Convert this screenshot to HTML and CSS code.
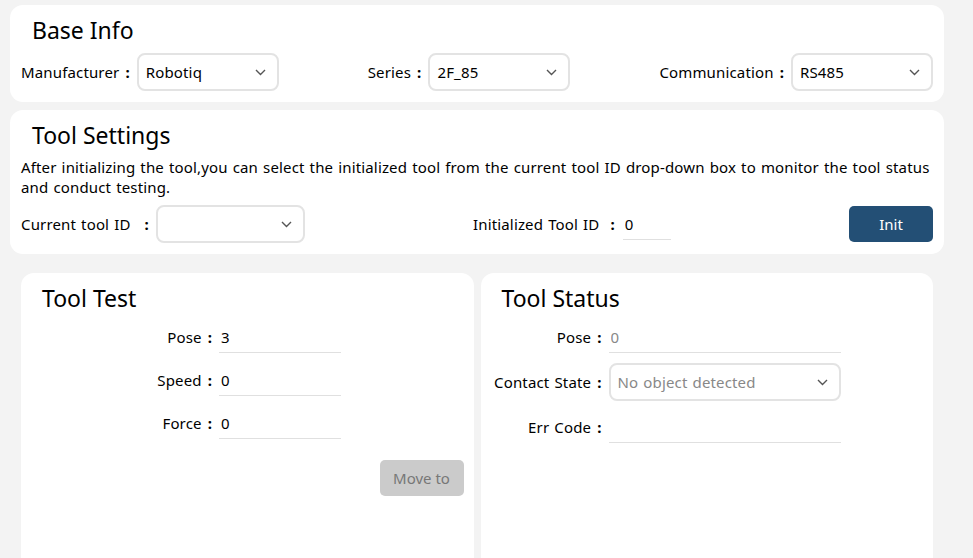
FILE: index.html
```html
<!DOCTYPE html>
<html lang="en">
<head>
    <meta charset="UTF-8">
    <meta name="viewport" content="width=device-width, initial-scale=1.0">
    <title>Tool Config</title>
    <link rel="stylesheet" href="styles.css">
</head>
<body>
    <div class="page">
        <div class="card">
            <h2 class="card-title">Base Info</h2>
            <div class="row">
                <div class="field">
                    <span class="label">Manufacturer<span class="colon">:</span></span>
                    <div class="select select-sm">
                        <span>Robotiq</span>
                        <svg width="11" height="7" viewBox="0 0 11 7"><path d="M1 1l4.5 4.5L10 1" fill="none" stroke="#555" stroke-width="1.4"/></svg>
                    </div>
                </div>
                <div class="field">
                    <span class="label">Series<span class="colon">:</span></span>
                    <div class="select select-sm">
                        <span>2F_85</span>
                        <svg width="11" height="7" viewBox="0 0 11 7"><path d="M1 1l4.5 4.5L10 1" fill="none" stroke="#555" stroke-width="1.4"/></svg>
                    </div>
                </div>
                <div class="field">
                    <span class="label">Communication<span class="colon">:</span></span>
                    <div class="select select-sm">
                        <span>RS485</span>
                        <svg width="11" height="7" viewBox="0 0 11 7"><path d="M1 1l4.5 4.5L10 1" fill="none" stroke="#555" stroke-width="1.4"/></svg>
                    </div>
                </div>
            </div>
        </div>

        <div class="card">
            <h2 class="card-title">Tool Settings</h2>
            <p class="desc">After initializing the tool,you can select the initialized tool from the current tool ID drop-down box to monitor the tool status and conduct testing.</p>
            <div class="row">
                <div class="field">
                    <span class="label">Current tool ID<span class="colon colon-wide">:</span></span>
                    <div class="select select-id">
                        <span></span>
                        <svg width="11" height="7" viewBox="0 0 11 7"><path d="M1 1l4.5 4.5L10 1" fill="none" stroke="#555" stroke-width="1.4"/></svg>
                    </div>
                </div>
                <div class="field field-mid">
                    <span class="label">Initialized Tool ID<span class="colon colon-mid">:</span></span>
                    <input class="line-input line-short" type="text" value="0">
                </div>
                <button class="btn btn-primary">Init</button>
            </div>
        </div>

        <div class="panels">
            <div class="card panel">
                <h2 class="card-title">Tool Test</h2>
                <div class="form form-test">
                    <span class="label">Pose<span class="colon">:</span></span>
                    <input class="line-input" type="text" value="3">
                    <span class="label">Speed<span class="colon">:</span></span>
                    <input class="line-input" type="text" value="0">
                    <span class="label">Force<span class="colon">:</span></span>
                    <input class="line-input" type="text" value="0">
                </div>
                <div class="actions">
                    <button class="btn btn-disabled" disabled>Move to</button>
                </div>
            </div>
            <div class="card panel">
                <h2 class="card-title">Tool Status</h2>
                <div class="form form-status">
                    <span class="label">Pose<span class="colon">:</span></span>
                    <input class="line-input muted" type="text" value="0" readonly>
                    <span class="label">Contact State<span class="colon">:</span></span>
                    <div class="select">
                        <span class="muted">No object detected</span>
                        <svg width="11" height="7" viewBox="0 0 11 7"><path d="M1 1l4.5 4.5L10 1" fill="none" stroke="#555" stroke-width="1.4"/></svg>
                    </div>
                    <span class="label">Err Code<span class="colon">:</span></span>
                    <input class="line-input" type="text" value="" readonly>
                </div>
            </div>
        </div>
    </div>
</body>
</html>
```

FILE: styles.css
```css
body, html {
    margin: 0;
    padding: 0;
    height: 100%;
    background-color: #f3f3f3;
    font-family: "Noto Sans", "Noto Sans CJK SC", sans-serif;
    font-size: 15px;
    letter-spacing: 0.15px;
    word-spacing: 1px;
    color: #000;
    overflow: hidden;
}
.page {
    padding: 5px 29px 0 10px;
}
.card {
    background-color: #fff;
    border-radius: 13px;
    padding: 10px 11px 11px 11px;
    margin-bottom: 8px;
}
.card-title {
    margin: 0;
    padding-left: 11px;
    font-size: 23px;
    font-weight: normal;
    letter-spacing: 0;
    word-spacing: 0;
    line-height: 30px;
}
.row {
    display: flex;
    align-items: center;
    justify-content: space-between;
    margin-top: 8px;
}
.field {
    display: flex;
    align-items: center;
}
.field-mid {
    margin-right: 10px;
}
.label {
    white-space: nowrap;
}
.colon {
    display: inline-block;
    margin: 0 7px 0 6px;
    font-weight: bold;
}
.colon-wide {
    margin-left: 14px;
}
.colon-mid {
    margin-left: 11px;
    margin-right: 8px;
}
.select {
    box-sizing: border-box;
    height: 38px;
    border: 2px solid #e3e3e3;
    border-radius: 8px;
    display: flex;
    align-items: center;
    justify-content: space-between;
    padding: 0 11px 0 7px;
}
.select-sm {
    width: 142px;
}
.select-id {
    width: 149px;
}
.muted {
    color: #888;
}
.desc {
    margin: 7px 0 0 0;
    line-height: 20px;
}
.line-input {
    box-sizing: border-box;
    height: 32px;
    border: none;
    border-bottom: 1px solid #e0e0e0;
    outline: none;
    font: inherit;
    color: inherit;
    padding: 0 2px;
    background: transparent;
}
.line-input.muted {
    color: #888;
}
.line-short {
    width: 48px;
}
.btn {
    font: inherit;
    border: none;
    border-radius: 5px;
    height: 36px;
    width: 84px;
}
.btn-primary {
    background-color: #234f75;
    color: #fff;
}
.btn-disabled {
    background-color: #cbcbcb;
    color: #777;
}
.panels {
    display: grid;
    grid-template-columns: 1fr 1fr;
    gap: 7px;
    margin: 19px 11px 0 11px;
}
.panel {
    height: 300px;
    padding-left: 21px;
    padding-right: 10px;
}
.panel .card-title {
    padding-left: 0;
}
.form {
    display: grid;
    align-items: center;
    margin-top: 8px;
}
.form .label {
    text-align: right;
}
.form-test {
    grid-template-columns: 177px 122px;
    row-gap: 11px;
}
.form-status {
    grid-template-columns: 117px 232px;
    row-gap: 10px;
    margin-left: -10px;
}
.actions {
    display: flex;
    justify-content: flex-end;
    margin-top: 21px;
}
```
